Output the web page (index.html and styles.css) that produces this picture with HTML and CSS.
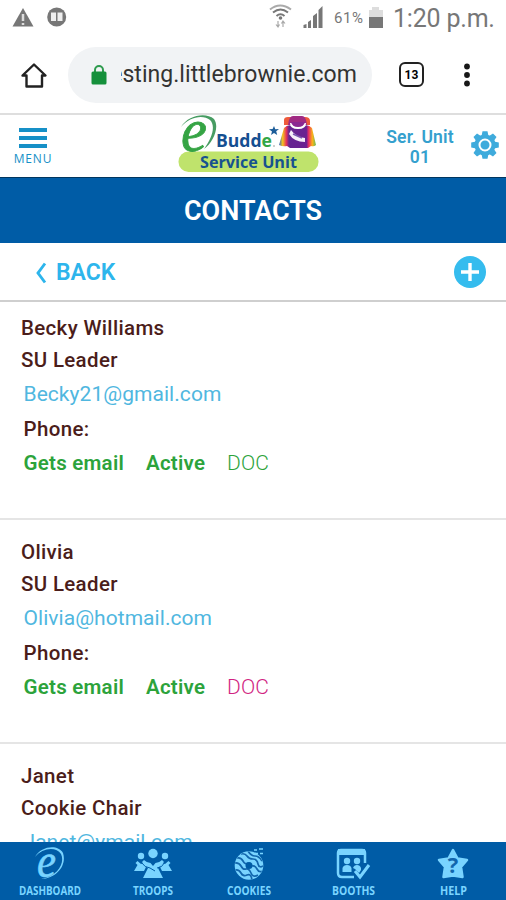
FILE: index.html
```html
<!DOCTYPE html>
<html lang="en">
<head>
<meta charset="utf-8">
<title>Contacts</title>
<link rel="stylesheet" href="styles.css">
</head>
<body>
<div class="screen">
  <header class="status">
    <svg class="status-left" width="70" height="36" viewBox="0 0 70 36">
      <path d="M23 8 33.500 26.500H12.500Z" fill="#777"/>
      <path d="M23 14v7M23 23v2" stroke="#ddd" stroke-width="2.500"/>
      <circle cx="56.700" cy="17" r="9.500" fill="#777"/>
      <path d="M51 12.500h5v8.500h-5zM57.500 12.500h5v8.500h-5z" fill="#eee"/>
    </svg>
    <div class="status-right">
      <svg width="56" height="36" viewBox="0 0 56 36">
        <g fill="none" stroke="#777" stroke-width="2">
          <path d="M1 9.500Q11 1.500 22 9.500" stroke="#aaa"/>
          <path d="M4 12.500Q11.500 6.500 19 12.500"/>
          <path d="M7.500 16Q11.500 12.500 15.500 16"/>
        </g>
        <circle cx="11.500" cy="18" r="1.800" fill="#777"/>
        <path d="M9 21v6M7 24.500 9 27l1.500-2.500M14 27v-6M12.500 23.500 14 21l2 2.500" fill="none" stroke="#aaa" stroke-width="1.200"/>
        <path d="M34.500 28v-3l3-1v4zM39 28v-6l3-2v8zM44 28V16l4-3v15zM49.500 28V10l4-4v22z" fill="#777"/>
      </svg>
      <span class="percent">61%</span>
      <svg class="battery" width="16" height="24" viewBox="0 0 16 24"><path d="M4 1h7v3h4v8H1V4h3z" fill="#ddd"/><path d="M1 11h14v11H1z" fill="#777"/></svg>
      <span class="clock">1:20 p.m.</span>
    </div>
  </header>

  <div class="browser">
    <svg class="home" width="28" height="28" viewBox="0 0 28 28"><path d="M2.500 14.500 14 3.500l11.500 11H22V25.500H6.500V14.500Z" fill="none" stroke="#222" stroke-width="2.400" stroke-linejoin="round"/></svg>
    <div class="address">
      <svg width="18" height="22" viewBox="0 0 18 22"><path d="M5 8V6a4 4 0 0 1 8 0v2" fill="none" stroke="#2d9a4d" stroke-width="2"/><rect x="1.500" y="7.500" width="15" height="13" rx="1.500" fill="#15903b"/></svg>
      <div class="url"><span>esting.littlebrownie.com</span></div>
    </div>
    <div class="tabs">13</div>
    <svg class="dots" width="8" height="26" viewBox="0 0 8 26"><g fill="#181818"><circle cx="4" cy="4.500" r="2.900"/><circle cx="4" cy="13" r="2.900"/><circle cx="4" cy="21.500" r="2.900"/></g></svg>
  </div>

  <div class="app-bar">
    <div class="menu">
      <i></i><i></i><i></i>
      <span>MENU</span>
    </div>
    <svg class="logo" width="150" height="62" viewBox="175 115 150 62">
      <defs><linearGradient id="shirt"><stop offset="0" stop-color="#3a67c5"/><stop offset=".1" stop-color="#f6c51c"/><stop offset=".2" stop-color="#e4325b"/><stop offset=".27" stop-color="#652591"/><stop offset=".74" stop-color="#6a2191"/><stop offset=".8" stop-color="#e52f65"/><stop offset=".9" stop-color="#ffb018"/><stop offset="1" stop-color="#65bd55"/></linearGradient></defs>
      <rect x="178.500" y="151.500" width="140" height="20.500" rx="10" fill="#bfe36c"/>
      <text class="logo-e" x="181" y="151" fill="#35a444" stroke="#35a444" stroke-width=".8" textLength="26" lengthAdjust="spacingAndGlyphs">e</text>
      <path d="M181 127C188 115 206 112 214 119C220 127 213 143 204 149C212 138 216 126 210 120C203 114 189 117 181 127Z" fill="#479c62"/>
      <text class="logo-name" x="216" y="147" textLength="56" lengthAdjust="spacingAndGlyphs"><tspan fill="#154f91">Budd</tspan><tspan fill="#33a746">e</tspan></text>
      <circle cx="274" cy="146" r=".7" fill="#777"/>
      <path d="m274 126 1.300 3.200 3.700-.2-2.800 2.300 1 3.700-3.200-2-3 2 1-3.500-3-2.300 3.600-.1Z" fill="#1c5d99"/>
      <path d="M284 125v-5q0-3 4-3h17q5 0 5 4v4z" fill="#ee5b3c"/>
      <path d="M288 125q1-9 5-9h9q4 0 5 9z" fill="#a02a83"/>
      <path d="m284 128-5 17q4 2 8 1l3 2h18l3-2q3 1 5-1l-4-17q-4-4-8-2h-12q-4-2-8 2Z" fill="url(#shirt)"/>
      <path d="M290 123q0 6 8 6t8-6z" fill="#fff"/>
      <path d="M291 122q1 5 7 5t7-5z" fill="#8b2791"/>
      <path d="M291 130q5 7 14 8v4q-11 0-16-8z" fill="#f5eef9"/>
      <path d="m293 134 9 4" stroke="#7956b0" stroke-width="1.500"/>
      <text class="logo-unit" x="200" y="167.500" fill="#17528f" textLength="97" lengthAdjust="spacingAndGlyphs">Service Unit</text>
    </svg>
    <div class="unit">Ser. Unit<br>01</div>
    <svg class="gear" width="30" height="30" viewBox="-15 -15 30 30">
      <g fill="#3fabdc"><circle r="10.500"/><g id="cog"><path d="M-2.500-13.800h5l1 5h-7zM-2.500 13.800h5l1-5h-7zM-13.800-2.500v5l5 1v-7zM13.800-2.500v5l-5 1v-7z"/></g><use href="#cog" transform="rotate(45)"/></g>
      <circle r="5.500" fill="none" stroke="#fff" stroke-width="2"/><circle r="3" fill="#3fabdc"/>
    </svg>
  </div>

  <h1><span>CONTACTS</span></h1>

  <div class="actions">
    <div class="back"><svg width="12" height="24" viewBox="0 0 12 24"><path d="M10 2.500 3 12l7 9.500" fill="none" stroke="#2db5ec" stroke-width="2.900"/></svg><span>BACK</span></div>
    <svg class="add" width="34" height="34" viewBox="0 0 34 34"><circle cx="17" cy="17" r="16" fill="#35bcee"/><path d="M8 17h18M17 8v18" stroke="#fff" stroke-width="3.400"/></svg>
  </div>

  <main>
    <section class="contact first">
      <div class="name"><span>Becky Williams</span></div>
      <div class="role"><span>SU Leader</span></div>
      <div class="email"><span>Becky21@gmail.com</span></div>
      <div class="phone"><span>Phone:</span></div>
      <div class="flags"><b class="gets">Gets email</b><b class="active">Active</b><span class="doc">DOC</span></div>
    </section>
    <section class="contact">
      <div class="name"><span>Olivia</span></div>
      <div class="role"><span>SU Leader</span></div>
      <div class="email"><span>Olivia@hotmail.com</span></div>
      <div class="phone"><span>Phone:</span></div>
      <div class="flags"><b class="gets">Gets email</b><b class="active">Active</b><span class="doc missing">DOC</span></div>
    </section>
    <section class="contact">
      <div class="name"><span>Janet</span></div>
      <div class="role"><span>Cookie Chair</span></div>
      <div class="email"><span>Janet@ymail.com</span></div>
    </section>
  </main>

  <nav>
    <div class="tab">
      <svg width="34" height="36" viewBox="0 0 34 36"><text class="nav-e" x="4" y="32" fill="#79d4ff" stroke="#79d4ff" stroke-width=".6" textLength="19" lengthAdjust="spacingAndGlyphs">e</text><path d="M2 12C8 1 25-1 30 8C34 20 24 33 8 34C26 31 32 17 28 9C23 1 9 3 2 12Z" fill="#79d4ff"/></svg>
      <span class="label"><svg width="64" height="14"><text x="1" y="12" textLength="62" lengthAdjust="spacingAndGlyphs">DASHBOARD</text></svg></span>
    </div>
    <div class="tab">
      <svg width="40" height="36" viewBox="0 0 40 36"><g fill="#79d4ff"><circle cx="20" cy="8.500" r="4.700"/><circle cx="8" cy="11" r="3.200"/><circle cx="32" cy="11" r="3.200"/><path d="M11 15q3 3 6.500 3l2.500 3 2.500-3q3.500 0 6.500-3l2 2q-3 4-6 6l5 10H10l5-10q-4-2-6-6Z"/><path d="M4.500 16 8 19l3-1 2 4-2 4H1l3.500-6-2-2ZM35.500 16 32 19l-3-1-2 4 2 4h10l-3.500-6 2-2Z"/></g><path d="M8 17q4 6 9 6l5 3M32 17q-3 6-8 6" fill="none" stroke="#005ca6" stroke-width="1"/></svg>
      <span class="label"><svg width="64" height="14"><text x="12" y="12" textLength="40" lengthAdjust="spacingAndGlyphs">TROOPS</text></svg></span>
    </div>
    <div class="tab">
      <svg width="34" height="36" viewBox="0 0 34 36"><defs><clipPath id="donut"><circle cx="17" cy="20.500" r="14"/></clipPath></defs><circle cx="17" cy="20.500" r="14.300" fill="#79d4ff"/><g clip-path="url(#donut)" fill="none" stroke="#1266ad" stroke-width="1.700"><path d="M9 9q4-1 6 2t6 3 5 5 7 1M5 13q4-1 6 3t5 2M20 21q3-1 5 3t6 2M2 18q5-1 7 3t5 3 5 4 7 2M3 25q4-1 6 3t6 2 5 5M16 6q3 5 7 5t7 5"/></g><circle cx="17" cy="20.500" r="3.500" fill="#005ca6"/><path d="M22 5h3M27 4h4M23 8.500h3M28 8.500h3" stroke="#79d4ff" stroke-width="1.700"/></svg>
      <span class="label"><svg width="64" height="14"><text x="10" y="12" textLength="44" lengthAdjust="spacingAndGlyphs">COOKIES</text></svg></span>
    </div>
    <div class="tab">
      <svg width="36" height="36" viewBox="0 0 36 36"><g fill="none" stroke="#79d4ff" stroke-width="2.500"><path d="M30 18V8q0-3-3-3H6Q3 5 3 8v20q0 4 4 4h12"/><path d="m20 26 5 6 9-12" stroke-width="3"/></g><path d="M3 4h27v6H3z" fill="#79d4ff"/><g fill="#79d4ff"><circle cx="12" cy="16" r="3.200"/><circle cx="22" cy="16" r="3.200"/><path d="M7.500 27v-4q1-3 4.500-3t4.500 3v4zM18 23q1-3 4-3t4 3v2l-2 3-4-4z"/></g></svg>
      <span class="label"><svg width="64" height="14"><text x="11" y="12" textLength="43" lengthAdjust="spacingAndGlyphs">BOOTHS</text></svg></span>
    </div>
    <div class="tab">
      <svg width="34" height="36" viewBox="0 0 34 36"><path d="m17 5 4.500 8.500L31 15l-6 7 1.500 10-9.500-1.500L7.500 32 9 22l-6-7 9.500-1.500Z" fill="#79d4ff" stroke="#79d4ff" stroke-width="2.500" stroke-linejoin="round"/><text class="question" x="17" y="28" text-anchor="middle" fill="#1266ad">?</text></svg>
      <span class="label"><svg width="64" height="14"><text x="19" y="12" textLength="27" lengthAdjust="spacingAndGlyphs">HELP</text></svg></span>
    </div>
  </nav>
</div>
</body>
</html>
```

FILE: styles.css
```css
* { box-sizing: border-box; }
body { margin: 0; font-family: Roboto, sans-serif; background: #fff; }
svg { display: block; flex: none; }
.screen { width: 506px; height: 900px; overflow: hidden; display: flex; flex-direction: column; }
.status { height: 36px; flex: none; display: flex; justify-content: space-between; color: #777; }
.status-right { display: flex; align-items: center; width: 237px; white-space: nowrap; }
.percent { width: 42px; padding-left: 9px; font-size: 15px; letter-spacing: .6px; }
.battery { margin-left: 1px; }
.clock { margin-left: 9px; font-size: 25px; letter-spacing: -.2px; }
.browser { height: 79px; flex: none; display: flex; align-items: center; padding-left: 20px; border-bottom: 2px solid #dedede; }
.address { width: 304px; height: 56px; margin-left: 20px; border-radius: 28px; background: #f1f3f5; display: flex; align-items: center; padding-left: 22px; }
.url { width: 236px; height: 32px; overflow: hidden; margin-left: 13px; display: flex; justify-content: flex-end; align-items: center; color: #333; font-size: 23px; letter-spacing: .05px; white-space: nowrap; }
.tabs { width: 25px; height: 25px; margin-left: 27px; border: 2.500px solid #222; border-radius: 6px; font-size: 12px; font-weight: 700; display: grid; place-items: center; }
.dots { margin-left: 39px; }
.app-bar { height: 63px; flex: none; display: flex; border-bottom: 1px solid #00365f; }
.menu { width: 66px; padding-top: 13px; display: flex; flex-direction: column; align-items: center; gap: 4px; color: #1690c7; }
.menu i { width: 28px; height: 4px; background: #1690c7; }
.menu span { font: 12px/14px "Open Sans", sans-serif; letter-spacing: .8px; }
.logo { margin-left: 109px; }
.logo-e { font: italic 62px "Liberation Serif", serif; }
.logo-name { font: bold 17px "Open Sans", sans-serif; }
.logo-unit { font: bold 15.500px "Open Sans", sans-serif; }
.unit { width: 72px; margin-left: 59px; padding-top: 12px; font-size: 17.500px; font-weight: 600; line-height: 20px; letter-spacing: .15px; text-align: center; color: #35a0ce; white-space: nowrap; }
.gear { margin: 15px 0 0 14px; }
h1 { margin: 0; height: 65px; padding-top: 1px; flex: none; background: #005ca6; color: #fff; font-size: 27px; font-weight: 600; display: flex; align-items: center; justify-content: center; }
.actions { height: 59px; flex: none; display: flex; justify-content: space-between; align-items: center; padding: 1px 19px 0 35px; border-bottom: 2px solid #cfcfcf; }
.back { display: flex; align-items: center; gap: 9px; padding-top: 1px; color: #2db5ec; font-size: 23px; font-weight: 600; }
main { flex: 1; min-height: 0; overflow: hidden; }
.contact { height: 224px; padding: 16px 0 0 21px; border-bottom: 2px solid #e5e5e5; font-size: 20.500px; color: #4b1d1a; white-space: nowrap; }
.contact.first { height: 218px; padding-top: 10px; }
.name, .role { height: 32px; line-height: 32px; font-weight: 500; letter-spacing: .33px; }
.email, .phone, .flags { height: 34.500px; line-height: 36px; padding-left: 2.500px; }
.email { color: #50b7df; font-size: 21px; letter-spacing: .05px; }
.phone { font-weight: 500; letter-spacing: .35px; }
.flags { display: flex; color: #2ca33b; }
.flags b { font-weight: 600; letter-spacing: .25px; }
.gets { width: 122.500px; }
.active { width: 81px; }
.doc { font-size: 21px; font-weight: 300; letter-spacing: .15px; }
.missing { color: #d12381; }
nav { height: 58px; flex: none; background: #005ca6; display: grid; grid-template-columns: 103px 96px 104px 100px 64px; padding: 3px 0 0 18px; }
.tab { width: 64px; display: flex; flex-direction: column; align-items: center; }
.label { display: block; margin-top: 2px; font: bold 12px "Open Sans", sans-serif; fill: #79d4ff; }
.nav-e { font: italic 48px "Liberation Serif", serif; }
.question { font: bold 22px "Open Sans", sans-serif; }
```
